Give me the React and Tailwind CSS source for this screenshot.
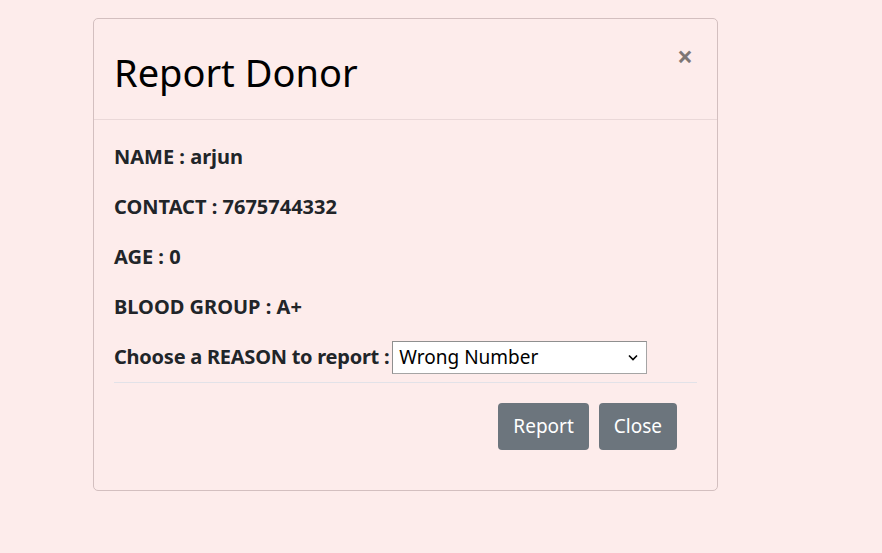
import React from 'react';

export default function App() {
  const rows = [
    ['NAME', 'arjun'],
    ['CONTACT', '7675744332'],
    ['AGE', '0'],
    ['BLOOD GROUP', 'A+'],
  ];

  return (
    <div className="w-[882px] h-[553px] bg-[#fdeceb] pt-[18px] pl-[93px] font-['Noto_Sans',sans-serif] text-[#212529]">
      <div className="w-[625px] h-[473px] border border-[#d3bfbf] rounded-[5px] flex flex-col">
        {/* header */}
        <div className="h-[101px] border-b border-[#ead8d8] flex items-start justify-between pl-[20px] pr-[24px]">
          <h1 className="mt-[30px] text-[38px] leading-[46px] font-normal text-black">Report Donor</h1>
          <button className="mt-[23px] text-[28px] leading-none font-bold text-black/50">×</button>
        </div>

        {/* body */}
        <div className="px-[20px] pt-[12px]">
          {rows.map(([k, v]) => (
            <div key={k} className="h-[50px] flex items-center text-[20px] font-bold">
              {k} : {v}
            </div>
          ))}
          <div className="h-[50px] flex items-center text-[20px] font-bold">
            <span className="tracking-[-0.25px]">Choose a REASON to report :</span>
            <div className="ml-[3px] w-[255px] h-[33px] border border-[#a5a5a5] border-t-[#8f8f8f] border-l-[#8f8f8f] bg-white flex items-center justify-between pl-[6px] pr-[8px]">
              <span className="text-[19px] font-normal text-black">Wrong Number</span>
              <svg width="10" height="7" viewBox="0 0 10 7" fill="none" stroke="#000" strokeWidth="1.6">
                <path d="M1 1.5 L5 5.5 L9 1.5" />
              </svg>
            </div>
          </div>
          <div className="border-t border-[#e2e2e8]" />
          <div className="flex justify-end gap-[10px] mt-[20px] pr-[20px]">
            <button className="h-[47px] px-[15px] rounded-[4px] bg-[#6c757d] text-white text-[19px]">Report</button>
            <button className="h-[47px] px-[15px] rounded-[4px] bg-[#6c757d] text-white text-[19px]">Close</button>
          </div>
        </div>
      </div>
    </div>
  );
}
